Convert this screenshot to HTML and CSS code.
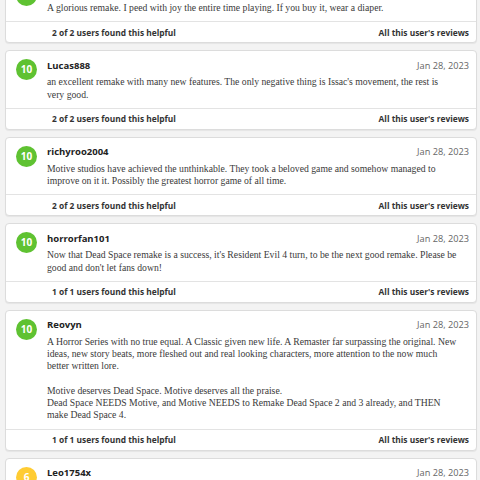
FILE: index.html
```html
<!DOCTYPE html>
<html lang="en">
<head>
<meta charset="utf-8">
<title>User reviews</title>
<link rel="stylesheet" href="styles.css">
</head>
<body>
<div class="reviews">
  <div class="review">
    <div class="review-body">
      <div class="score positive">10</div>
      <div class="review-main">
        <div class="review-head"><span class="author">JustAGamer</span><span class="date">Jan 28, 2023</span></div>
        <p class="text">A glorious remake. I peed with joy the entire time playing. If you buy it, wear a diaper.</p>
      </div>
    </div>
    <div class="review-foot"><span>2 of 2 users found this helpful</span><span>All this user's reviews</span></div>
  </div>

  <div class="review">
    <div class="review-body">
      <div class="score positive">10</div>
      <div class="review-main">
        <div class="review-head"><span class="author">Lucas888</span><span class="date">Jan 28, 2023</span></div>
        <p class="text">an excellent remake with many new features. The only negative thing is Issac's movement, the rest is<br>very good.</p>
      </div>
    </div>
    <div class="review-foot"><span>2 of 2 users found this helpful</span><span>All this user's reviews</span></div>
  </div>

  <div class="review">
    <div class="review-body">
      <div class="score positive">10</div>
      <div class="review-main">
        <div class="review-head"><span class="author">richyroo2004</span><span class="date">Jan 28, 2023</span></div>
        <p class="text">Motive studios have achieved the unthinkable. They took a beloved game and somehow managed to<br>improve on it it. Possibly the greatest horror game of all time.</p>
      </div>
    </div>
    <div class="review-foot"><span>2 of 2 users found this helpful</span><span>All this user's reviews</span></div>
  </div>

  <div class="review">
    <div class="review-body">
      <div class="score positive">10</div>
      <div class="review-main">
        <div class="review-head"><span class="author">horrorfan101</span><span class="date">Jan 28, 2023</span></div>
        <p class="text">Now that Dead Space remake is a success, it's Resident Evil 4 turn, to be the next good remake. Please be<br>good and don't let fans down!</p>
      </div>
    </div>
    <div class="review-foot"><span>1 of 1 users found this helpful</span><span>All this user's reviews</span></div>
  </div>

  <div class="review">
    <div class="review-body">
      <div class="score positive">10</div>
      <div class="review-main">
        <div class="review-head"><span class="author">Reovyn</span><span class="date">Jan 28, 2023</span></div>
        <p class="text">A Horror Series with no true equal. A Classic given new life. A Remaster far surpassing the original. New<br>ideas, new story beats, more fleshed out and real looking characters, more attention to the now much<br>better written lore.<br><br>Motive deserves Dead Space. Motive deserves all the praise.<br>Dead Space NEEDS Motive, and Motive NEEDS to Remake Dead Space 2 and 3 already, and THEN<br>make Dead Space 4.</p>
      </div>
    </div>
    <div class="review-foot"><span>1 of 1 users found this helpful</span><span>All this user's reviews</span></div>
  </div>

  <div class="review">
    <div class="review-body">
      <div class="score mixed">6</div>
      <div class="review-main">
        <div class="review-head"><span class="author">Leo1754x</span><span class="date">Jan 28, 2023</span></div>
        <p class="text">Good remake, but the performance on PC still needs some work before it feels finished.</p>
      </div>
    </div>
    <div class="review-foot"><span>0 of 0 users found this helpful</span><span>All this user's reviews</span></div>
  </div>
</div>
</body>
</html>
```

FILE: styles.css
```css
html, body {
  margin: 0;
  padding: 0;
  background: #f3f3f3;
  overflow: hidden;
}

.reviews {
  display: flex;
  flex-direction: column;
  gap: 7px;
  margin-top: -24px;
  padding: 0 3px 0 5px;
}

.review {
  background: #fff;
  border: 1px solid #dcdcdc;
  border-radius: 4px;
  box-shadow: 0 1px 1px rgba(0, 0, 0, 0.06);
}

.review-body {
  display: flex;
  gap: 10px;
  padding: 7px 2px 7px 10px;
}

.score {
  flex: none;
  width: 21px;
  height: 21px;
  margin-top: 1px;
  border-radius: 50%;
  color: #fff;
  font-family: "Open Sans", "Liberation Sans", sans-serif;
  font-weight: 700;
  font-size: 10px;
  line-height: 21px;
  text-align: center;
}

.score.positive { background: #5fc232; }
.score.mixed { background: #ffcc33; }

.review-main {
  flex: 1;
  min-width: 0;
}

.review-head {
  display: flex;
  justify-content: space-between;
  align-items: center;
  height: 14px;
  margin-bottom: 4px;
  padding-right: 5px;
  font-family: "Open Sans", "Liberation Sans", sans-serif;
}

.author {
  font-weight: 700;
  font-size: 9.5px;
  color: #222;
}

.date {
  font-size: 9.2px;
  color: #666;
}

.text {
  margin: 0;
  font-family: "Liberation Serif", "DejaVu Serif", serif;
  font-size: 9.7px;
  line-height: 12.25px;
  color: #3a3a3a;
}

.review-foot {
  display: flex;
  justify-content: space-between;
  align-items: center;
  height: 20px;
  padding: 0 7px 0 46px;
  border-top: 1px solid #e3e3e3;
  font-family: "Open Sans", "Liberation Sans", sans-serif;
  font-weight: 700;
  font-size: 8.4px;
  color: #333;
}
```
